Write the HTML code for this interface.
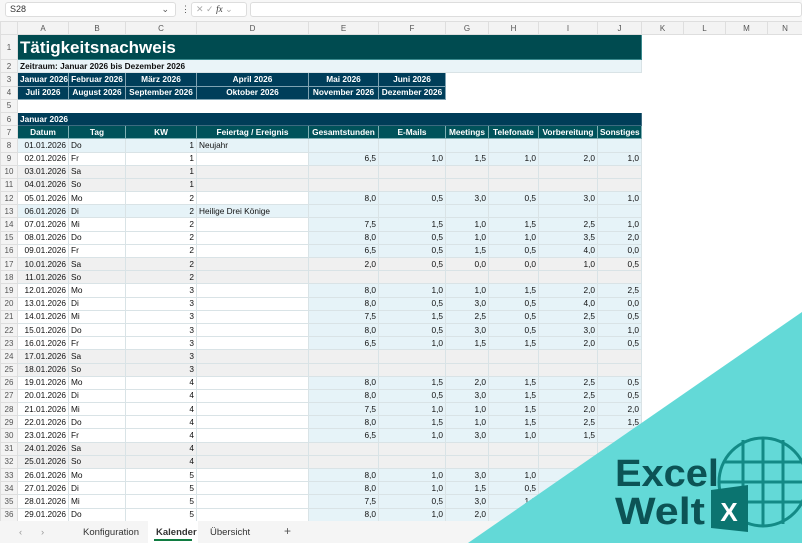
<!DOCTYPE html>
<html><head><meta charset="utf-8"><style>
*{margin:0;padding:0;box-sizing:border-box}
body{width:802px;height:543px;overflow:hidden;background:#fff;font-family:"Liberation Sans",sans-serif;position:relative}
.fb{position:absolute;top:0;left:0;width:802px;height:21px;background:#f7f7f7}
.nb{position:absolute;top:2px;left:5px;width:171px;height:15px;background:#fff;border:1px solid #ddd;border-radius:3px;font-size:9px;line-height:13px;padding-left:4px;color:#333}
.fx{position:absolute;top:2px;left:191px;width:56px;height:15px;background:#fff;border:1px solid #ddd;border-radius:3px;font-size:9px;line-height:13px;color:#aaa;padding-left:4px}
.in{position:absolute;top:2px;left:250px;width:552px;height:15px;background:#fff;border:1px solid #ddd;border-radius:3px}
table{position:absolute;top:21px;left:0;border-collapse:collapse;table-layout:fixed;width:802px;font-size:8.3px;color:#111}
td,th{border:1px solid #d9e3e6;height:13.2px;padding:0 2px;white-space:nowrap;overflow:hidden;line-height:11px}
th{background:#f3f3f3;color:#555;font-weight:normal;text-align:center;border-color:#dedede;font-size:8px}
.r{text-align:right}.c{text-align:center}
.w{background:#fff}.g{background:#f0f0f0}.b{background:#e6f3f8}
.e{background:#fff;border-color:#fff}
.nv{background:#003e5a;color:#fff;font-weight:bold;text-align:center;border-color:#7fa3b3}
.hd{background:#00525a;color:#fff;font-weight:bold;text-align:center;border-color:#7fb0b4}
.tabs{position:absolute;left:0;top:521px;width:802px;height:22px;background:#f5f5f5;font-size:9.5px;color:#333}
.tabs span{position:absolute;top:6px}
</style></head><body>
<div class="fb"><div class="nb">S28<span style="position:absolute;right:6px;color:#555">⌄</span></div><span style="position:absolute;left:181px;top:4px;font-size:9px;color:#555">⋮</span><div class="fx">✕ ✓ <i style="color:#333;font-family:'Liberation Serif'">fx</i> ⌄</div><div class="in"></div></div>
<table>
<colgroup><col style="width:17px"><col style="width:51px"><col style="width:57px"><col style="width:71px"><col style="width:112px"><col style="width:70px"><col style="width:67px"><col style="width:43px"><col style="width:50px"><col style="width:59px"><col style="width:44px"><col style="width:42px"><col style="width:42px"><col style="width:42px"><col style="width:35px"></colgroup>
<tr><th></th><th>A</th><th>B</th><th>C</th><th>D</th><th>E</th><th>F</th><th>G</th><th>H</th><th>I</th><th>J</th><th>K</th><th>L</th><th>M</th><th>N</th></tr>
<tr style="height:25px"><th style="height:25px">1</th><td colspan="10" style="background:#004b50;color:#fff;font-weight:bold;font-size:17px;border-color:#3a8a8e;height:25px">Tätigkeitsnachweis</td><td class="e"></td><td class="e"></td><td class="e"></td><td class="e"></td></tr>
<tr><th>2</th><td colspan="10" style="background:#eaf4f8;font-weight:bold">Zeitraum: Januar 2026 bis Dezember 2026</td><td class="e"></td><td class="e"></td><td class="e"></td><td class="e"></td></tr>
<tr><th>3</th><td class="nv">Januar 2026</td><td class="nv">Februar 2026</td><td class="nv">März 2026</td><td class="nv">April 2026</td><td class="nv">Mai 2026</td><td class="nv">Juni 2026</td><td class="e"></td><td class="e"></td><td class="e"></td><td class="e"></td><td class="e"></td><td class="e"></td><td class="e"></td><td class="e"></td></tr>
<tr><th>4</th><td class="nv">Juli 2026</td><td class="nv">August 2026</td><td class="nv">September 2026</td><td class="nv">Oktober 2026</td><td class="nv">November 2026</td><td class="nv">Dezember 2026</td><td class="e"></td><td class="e"></td><td class="e"></td><td class="e"></td><td class="e"></td><td class="e"></td><td class="e"></td><td class="e"></td></tr>
<tr><th>5</th><td class="e" colspan="14"></td></tr>
<tr><th>6</th><td colspan="10" style="background:#003d58;color:#fff;font-weight:bold;border-color:#3d6b80">Januar 2026</td><td class="e"></td><td class="e"></td><td class="e"></td><td class="e"></td></tr>
<tr><th>7</th><td class="hd">Datum</td><td class="hd">Tag</td><td class="hd">KW</td><td class="hd">Feiertag / Ereignis</td><td class="hd">Gesamtstunden</td><td class="hd">E-Mails</td><td class="hd">Meetings</td><td class="hd">Telefonate</td><td class="hd">Vorbereitung</td><td class="hd">Sonstiges</td><td class="e"></td><td class="e"></td><td class="e"></td><td class="e"></td></tr>
<tr><th>8</th><td class="b r">01.01.2026</td><td class="b">Do</td><td class="b r">1</td><td class="b">Neujahr</td><td class="b"></td><td class="b"></td><td class="b"></td><td class="b"></td><td class="b"></td><td class="b"></td><td class="e"></td><td class="e"></td><td class="e"></td><td class="e"></td></tr>
<tr><th>9</th><td class="w r">02.01.2026</td><td class="w">Fr</td><td class="w r">1</td><td class="w"></td><td class="b r">6,5</td><td class="b r">1,0</td><td class="b r">1,5</td><td class="b r">1,0</td><td class="b r">2,0</td><td class="b r">1,0</td><td class="e"></td><td class="e"></td><td class="e"></td><td class="e"></td></tr>
<tr><th>10</th><td class="g r">03.01.2026</td><td class="g">Sa</td><td class="g r">1</td><td class="g"></td><td class="g"></td><td class="g"></td><td class="g"></td><td class="g"></td><td class="g"></td><td class="g"></td><td class="e"></td><td class="e"></td><td class="e"></td><td class="e"></td></tr>
<tr><th>11</th><td class="g r">04.01.2026</td><td class="g">So</td><td class="g r">1</td><td class="g"></td><td class="g"></td><td class="g"></td><td class="g"></td><td class="g"></td><td class="g"></td><td class="g"></td><td class="e"></td><td class="e"></td><td class="e"></td><td class="e"></td></tr>
<tr><th>12</th><td class="w r">05.01.2026</td><td class="w">Mo</td><td class="w r">2</td><td class="w"></td><td class="b r">8,0</td><td class="b r">0,5</td><td class="b r">3,0</td><td class="b r">0,5</td><td class="b r">3,0</td><td class="b r">1,0</td><td class="e"></td><td class="e"></td><td class="e"></td><td class="e"></td></tr>
<tr><th>13</th><td class="b r">06.01.2026</td><td class="b">Di</td><td class="b r">2</td><td class="b">Heilige Drei Könige</td><td class="b"></td><td class="b"></td><td class="b"></td><td class="b"></td><td class="b"></td><td class="b"></td><td class="e"></td><td class="e"></td><td class="e"></td><td class="e"></td></tr>
<tr><th>14</th><td class="w r">07.01.2026</td><td class="w">Mi</td><td class="w r">2</td><td class="w"></td><td class="b r">7,5</td><td class="b r">1,5</td><td class="b r">1,0</td><td class="b r">1,5</td><td class="b r">2,5</td><td class="b r">1,0</td><td class="e"></td><td class="e"></td><td class="e"></td><td class="e"></td></tr>
<tr><th>15</th><td class="w r">08.01.2026</td><td class="w">Do</td><td class="w r">2</td><td class="w"></td><td class="b r">8,0</td><td class="b r">0,5</td><td class="b r">1,0</td><td class="b r">1,0</td><td class="b r">3,5</td><td class="b r">2,0</td><td class="e"></td><td class="e"></td><td class="e"></td><td class="e"></td></tr>
<tr><th>16</th><td class="w r">09.01.2026</td><td class="w">Fr</td><td class="w r">2</td><td class="w"></td><td class="b r">6,5</td><td class="b r">0,5</td><td class="b r">1,5</td><td class="b r">0,5</td><td class="b r">4,0</td><td class="b r">0,0</td><td class="e"></td><td class="e"></td><td class="e"></td><td class="e"></td></tr>
<tr><th>17</th><td class="g r">10.01.2026</td><td class="g">Sa</td><td class="g r">2</td><td class="g"></td><td class="g r">2,0</td><td class="g r">0,5</td><td class="g r">0,0</td><td class="g r">0,0</td><td class="g r">1,0</td><td class="g r">0,5</td><td class="e"></td><td class="e"></td><td class="e"></td><td class="e"></td></tr>
<tr><th>18</th><td class="g r">11.01.2026</td><td class="g">So</td><td class="g r">2</td><td class="g"></td><td class="g"></td><td class="g"></td><td class="g"></td><td class="g"></td><td class="g"></td><td class="g"></td><td class="e"></td><td class="e"></td><td class="e"></td><td class="e"></td></tr>
<tr><th>19</th><td class="w r">12.01.2026</td><td class="w">Mo</td><td class="w r">3</td><td class="w"></td><td class="b r">8,0</td><td class="b r">1,0</td><td class="b r">1,0</td><td class="b r">1,5</td><td class="b r">2,0</td><td class="b r">2,5</td><td class="e"></td><td class="e"></td><td class="e"></td><td class="e"></td></tr>
<tr><th>20</th><td class="w r">13.01.2026</td><td class="w">Di</td><td class="w r">3</td><td class="w"></td><td class="b r">8,0</td><td class="b r">0,5</td><td class="b r">3,0</td><td class="b r">0,5</td><td class="b r">4,0</td><td class="b r">0,0</td><td class="e"></td><td class="e"></td><td class="e"></td><td class="e"></td></tr>
<tr><th>21</th><td class="w r">14.01.2026</td><td class="w">Mi</td><td class="w r">3</td><td class="w"></td><td class="b r">7,5</td><td class="b r">1,5</td><td class="b r">2,5</td><td class="b r">0,5</td><td class="b r">2,5</td><td class="b r">0,5</td><td class="e"></td><td class="e"></td><td class="e"></td><td class="e"></td></tr>
<tr><th>22</th><td class="w r">15.01.2026</td><td class="w">Do</td><td class="w r">3</td><td class="w"></td><td class="b r">8,0</td><td class="b r">0,5</td><td class="b r">3,0</td><td class="b r">0,5</td><td class="b r">3,0</td><td class="b r">1,0</td><td class="e"></td><td class="e"></td><td class="e"></td><td class="e"></td></tr>
<tr><th>23</th><td class="w r">16.01.2026</td><td class="w">Fr</td><td class="w r">3</td><td class="w"></td><td class="b r">6,5</td><td class="b r">1,0</td><td class="b r">1,5</td><td class="b r">1,5</td><td class="b r">2,0</td><td class="b r">0,5</td><td class="e"></td><td class="e"></td><td class="e"></td><td class="e"></td></tr>
<tr><th>24</th><td class="g r">17.01.2026</td><td class="g">Sa</td><td class="g r">3</td><td class="g"></td><td class="g"></td><td class="g"></td><td class="g"></td><td class="g"></td><td class="g"></td><td class="g"></td><td class="e"></td><td class="e"></td><td class="e"></td><td class="e"></td></tr>
<tr><th>25</th><td class="g r">18.01.2026</td><td class="g">So</td><td class="g r">3</td><td class="g"></td><td class="g"></td><td class="g"></td><td class="g"></td><td class="g"></td><td class="g"></td><td class="g"></td><td class="e"></td><td class="e"></td><td class="e"></td><td class="e"></td></tr>
<tr><th>26</th><td class="w r">19.01.2026</td><td class="w">Mo</td><td class="w r">4</td><td class="w"></td><td class="b r">8,0</td><td class="b r">1,5</td><td class="b r">2,0</td><td class="b r">1,5</td><td class="b r">2,5</td><td class="b r">0,5</td><td class="e"></td><td class="e"></td><td class="e"></td><td class="e"></td></tr>
<tr><th>27</th><td class="w r">20.01.2026</td><td class="w">Di</td><td class="w r">4</td><td class="w"></td><td class="b r">8,0</td><td class="b r">0,5</td><td class="b r">3,0</td><td class="b r">1,5</td><td class="b r">2,5</td><td class="b r">0,5</td><td class="e"></td><td class="e"></td><td class="e"></td><td class="e"></td></tr>
<tr><th>28</th><td class="w r">21.01.2026</td><td class="w">Mi</td><td class="w r">4</td><td class="w"></td><td class="b r">7,5</td><td class="b r">1,0</td><td class="b r">1,0</td><td class="b r">1,5</td><td class="b r">2,0</td><td class="b r">2,0</td><td class="e"></td><td class="e"></td><td class="e"></td><td class="e"></td></tr>
<tr><th>29</th><td class="w r">22.01.2026</td><td class="w">Do</td><td class="w r">4</td><td class="w"></td><td class="b r">8,0</td><td class="b r">1,5</td><td class="b r">1,0</td><td class="b r">1,5</td><td class="b r">2,5</td><td class="b r">1,5</td><td class="e"></td><td class="e"></td><td class="e"></td><td class="e"></td></tr>
<tr><th>30</th><td class="w r">23.01.2026</td><td class="w">Fr</td><td class="w r">4</td><td class="w"></td><td class="b r">6,5</td><td class="b r">1,0</td><td class="b r">3,0</td><td class="b r">1,0</td><td class="b r">1,5</td><td class="b r">0,5</td><td class="e"></td><td class="e"></td><td class="e"></td><td class="e"></td></tr>
<tr><th>31</th><td class="g r">24.01.2026</td><td class="g">Sa</td><td class="g r">4</td><td class="g"></td><td class="g"></td><td class="g"></td><td class="g"></td><td class="g"></td><td class="g"></td><td class="g"></td><td class="e"></td><td class="e"></td><td class="e"></td><td class="e"></td></tr>
<tr><th>32</th><td class="g r">25.01.2026</td><td class="g">So</td><td class="g r">4</td><td class="g"></td><td class="g"></td><td class="g"></td><td class="g"></td><td class="g"></td><td class="g"></td><td class="g"></td><td class="e"></td><td class="e"></td><td class="e"></td><td class="e"></td></tr>
<tr><th>33</th><td class="w r">26.01.2026</td><td class="w">Mo</td><td class="w r">5</td><td class="w"></td><td class="b r">8,0</td><td class="b r">1,0</td><td class="b r">3,0</td><td class="b r">1,0</td><td class="b r">2,0</td><td class="b r">1,0</td><td class="e"></td><td class="e"></td><td class="e"></td><td class="e"></td></tr>
<tr><th>34</th><td class="w r">27.01.2026</td><td class="w">Di</td><td class="w r">5</td><td class="w"></td><td class="b r">8,0</td><td class="b r">1,0</td><td class="b r">1,5</td><td class="b r">0,5</td><td class="b r">3,0</td><td class="b r">1,0</td><td class="e"></td><td class="e"></td><td class="e"></td><td class="e"></td></tr>
<tr><th>35</th><td class="w r">28.01.2026</td><td class="w">Mi</td><td class="w r">5</td><td class="w"></td><td class="b r">7,5</td><td class="b r">0,5</td><td class="b r">3,0</td><td class="b r">1,0</td><td class="b r">2,0</td><td class="b r">1,0</td><td class="e"></td><td class="e"></td><td class="e"></td><td class="e"></td></tr>
<tr><th>36</th><td class="w r">29.01.2026</td><td class="w">Do</td><td class="w r">5</td><td class="w"></td><td class="b r">8,0</td><td class="b r">1,0</td><td class="b r">2,0</td><td class="b r">1,0</td><td class="b r">2,5</td><td class="b r">1,5</td><td class="e"></td><td class="e"></td><td class="e"></td><td class="e"></td></tr>
</table>
<div class="tabs">
<span style="left:19px;color:#999">‹</span><span style="left:41px;color:#999">›</span>
<span style="left:83px">Konfiguration</span>
<span style="left:148px;top:0;width:50px;height:22px;background:#fff;"></span>
<span style="left:156px;font-weight:bold">Kalender</span>
<span style="left:154px;top:18px;width:38px;height:2px;background:#107c41"></span>
<span style="left:210px">Übersicht</span>
<span style="left:284px;font-size:12px;top:3px;color:#555">+</span>
</div>
<svg style="position:absolute;left:0;top:0" width="802" height="543">
<polygon points="802,312 802,543 468,543" fill="#63d9d7"/>
<g fill="none" stroke="#138a86" stroke-width="3">
<circle cx="763" cy="482" r="44"/>
<line x1="719" y1="482" x2="807" y2="482"/><line x1="724" y1="462" x2="802" y2="462"/><line x1="724" y1="502" x2="802" y2="502"/>
<line x1="743" y1="440" x2="743" y2="524"/><line x1="763" y1="438" x2="763" y2="526"/><line x1="783" y1="440" x2="783" y2="524"/>
</g>
<polygon points="711,490 748,485 748,532 711,528" fill="#0b7470"/>
<text x="729" y="521" fill="#fff" font-family="Liberation Sans" font-weight="bold" font-size="26" text-anchor="middle">X</text>
<text x="615" y="486" fill="#0c5355" font-family="Liberation Sans" font-weight="bold" font-size="38" textLength="104" lengthAdjust="spacingAndGlyphs">Excel</text>
<text x="615" y="524" fill="#0c5355" font-family="Liberation Sans" font-weight="bold" font-size="38" textLength="90" lengthAdjust="spacingAndGlyphs">Welt</text>
</svg>
</body></html>
